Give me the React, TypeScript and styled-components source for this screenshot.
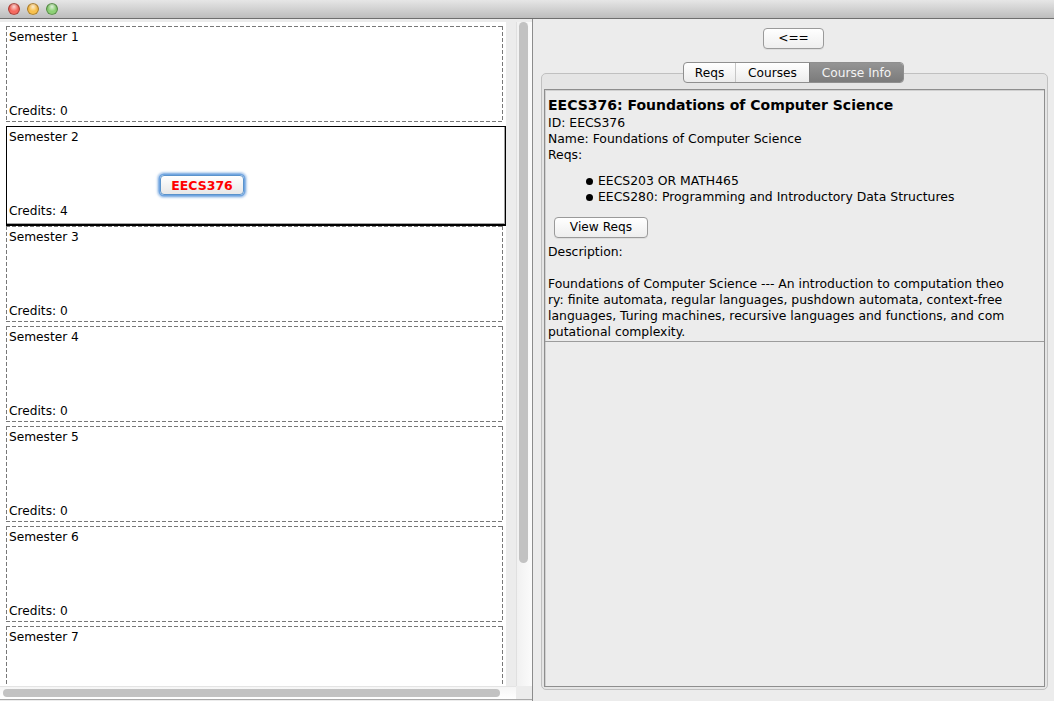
import React from "react";
import styled, { createGlobalStyle, css } from "styled-components";

const Global = createGlobalStyle`
  html, body { margin: 0; padding: 0; }
  body {
    width: 1054px;
    height: 701px;
    overflow: hidden;
    background: #ececec;
    font-family: "DejaVu Sans", "Liberation Sans", sans-serif;
    font-size: 12.2px;
    color: #000;
  }
  #root { height: 701px; }
  * { box-sizing: border-box; }
`;

const Window = styled.div`
  display: flex;
  flex-direction: column;
  width: 1054px;
  height: 701px;
`;

const TitleBar = styled.div`
  height: 19px;
  flex: none;
  border-bottom: 1px solid #6f6f6f;
  background: linear-gradient(#e6e6e6, #bdbdbd);
  display: flex;
  align-items: center;
  gap: 7px;
  padding-left: 8px;
  padding-bottom: 1px;
`;

const Light = styled.span<{ $c: string; $d: string }>`
  width: 12px;
  height: 12px;
  border-radius: 50%;
  background: radial-gradient(circle at 50% 30%, rgba(255, 255, 255, 0.75) 0, rgba(255, 255, 255, 0) 45%),
    radial-gradient(circle at 50% 70%, ${(p) => p.$c} 30%, ${(p) => p.$d} 100%);
  box-shadow: inset 0 0 0 1px rgba(0, 0, 0, 0.3);
`;

const Body = styled.div`
  flex: 1;
  display: flex;
  min-height: 0;
`;

const LeftPanel = styled.div`
  width: 532px;
  flex: none;
  display: grid;
  grid-template-columns: 506px 10px 16px;
  grid-template-rows: 3px 664px 13px 2px;
  background: #ececec;
`;

const Viewport = styled.div`
  grid-column: 1;
  grid-row: 2;
  background: #fff;
  overflow: hidden;
`;

const SemesterList = styled.div`
  display: flex;
  flex-direction: column;
  padding: 4px 0 0 6px;
`;

const dash = "#787878";

const SemesterBox = styled.div<{ $selected?: boolean }>`
  display: flex;
  flex-direction: column;
  flex: none;
  ${(p) =>
    p.$selected
      ? css`
          width: 501px;
          height: 100px;
          border: 1px solid #000;
          border-right-width: 2px;
          border-bottom-width: 2px;
          box-shadow: inset -1px -1px 0 #a5a5a5;
          padding: 2px 2px 5px 2px;
        `
      : css`
          width: 497px;
          height: 96px;
          margin-bottom: 4px;
          padding: 3px 3px 3px 3px;
          background:
            linear-gradient(90deg, ${dash} 66%, transparent 0) top left / 6px 1px repeat-x,
            linear-gradient(90deg, ${dash} 66%, transparent 0) bottom left / 6px 1px repeat-x,
            linear-gradient(180deg, ${dash} 66%, transparent 0) top left / 1px 6px repeat-y,
            linear-gradient(180deg, ${dash} 66%, transparent 0) top right / 1px 6px repeat-y;
        `}
`;

const Line = styled.div`
  line-height: 16px;
  height: 16px;
  white-space: nowrap;
`;

const SemesterBody = styled.div`
  flex: 1;
  display: flex;
  align-items: flex-start;
`;

const CourseChip = styled.div`
  margin: 30px 0 0 151px;
  width: 84px;
  height: 20px;
  display: flex;
  align-items: center;
  justify-content: center;
  border: 1px solid #5a93cc;
  border-radius: 4px;
  background: linear-gradient(#ffffff, #e7e7e7);
  box-shadow: 0 0 0 1.5px rgba(105, 160, 222, 0.9), 0 0 2px 2.5px rgba(105, 160, 222, 0.5);
  color: #ff0000;
  font-weight: bold;
  font-size: 12.5px;
`;

const VScroll = styled.div`
  grid-column: 3;
  grid-row: 2;
  background: linear-gradient(90deg, #f1f1f1, #fbfbfb);
  border-left: 1px solid #e0e0e0;
  padding-left: 2px;
`;

const VThumb = styled.div`
  width: 9px;
  height: 541px;
  border-radius: 5px;
  background: #c2c2c2;
`;

const HScroll = styled.div`
  grid-column: 1 / 3;
  grid-row: 3;
  background: linear-gradient(#f5f5f5, #fff);
  border-top: 1px solid #e4e4e4;
  padding: 2px 0 0 3px;
`;

const HThumb = styled.div`
  width: 497px;
  height: 8px;
  border-radius: 4px;
  background: #c2c2c2;
`;

const BottomEdge = styled.div`
  grid-column: 1 / 4;
  grid-row: 4;
  border-top: 1px solid #a9a9a9;
`;

const RightPanel = styled.div`
  flex: 1;
  display: flex;
  flex-direction: column;
  align-items: center;
  border-left: 1px solid #8c8c8c;
  padding: 9px 0 11px 0;
  background: #ececec;
`;

const PushButton = styled.button<{ $w: number }>`
  width: ${(p) => p.$w}px;
  height: 21px;
  flex: none;
  padding: 0;
  border: 1px solid #9a9a9a;
  border-radius: 4px;
  background: linear-gradient(#ffffff, #eeeeee);
  box-shadow: 0 1px 0 rgba(0, 0, 0, 0.06);
  font-family: "DejaVu Sans", "Liberation Sans", sans-serif;
  font-size: 12.2px;
  color: #000;
  line-height: 19px;
`;

const Tabs = styled.div`
  margin-top: 13px;
  display: flex;
  height: 21px;
  border: 1px solid #8f8f8f;
  border-radius: 4px;
  overflow: hidden;
  background: linear-gradient(#ffffff, #ececec);
  position: relative;
  z-index: 1;
  flex: none;
`;

const Tab = styled.div<{ $w: number; $active?: boolean }>`
  width: ${(p) => p.$w}px;
  display: flex;
  align-items: center;
  justify-content: center;
  font-size: 12.2px;
  & + & {
    border-left: 1px solid #c6c6c6;
  }
  ${(p) =>
    p.$active &&
    css`
      background: linear-gradient(#949494, #7b7b7b);
      color: #f3f3f3;
      border-left-color: #7b7b7b !important;
    `}
`;

const TabPane = styled.div`
  align-self: stretch;
  flex: 1;
  margin: -10px 6px 0 8px;
  border: 1px solid #c0c0c0;
  border-radius: 5px;
  background: #e5e5e5;
  padding: 15px 2px 2px 2px;
  display: flex;
  flex-direction: column;
`;

const ContentBox = styled.div`
  flex: 1;
  display: flex;
  flex-direction: column;
  border: 1px solid #8e8e8e;
  box-shadow: inset 1px 1px 0 #d0d0d0;
  background: #ececec;
`;

const InfoSection = styled.div`
  padding: 5px 3px 1px 3px;
  border-bottom: 1px solid #9c9c9c;
  font-size: 12.4px;
`;

const Title = styled.div`
  font-weight: bold;
  font-size: 14px;
  line-height: 20px;
  height: 20px;
  white-space: nowrap;
`;

const ReqList = styled.ul`
  list-style: none;
  margin: 10px 0 0 0;
  padding: 0 0 0 38px;
`;

const ReqItem = styled.li`
  display: flex;
  align-items: center;
  line-height: 16px;
  height: 16px;
  white-space: nowrap;
  &::before {
    content: "";
    width: 7px;
    height: 7px;
    border-radius: 50%;
    background: #000;
    margin-right: 5px;
    flex: none;
  }
`;

const ButtonRow = styled.div`
  margin: 12px 0 6px 6px;
  display: flex;
`;

const BlankLine = styled.div`
  height: 16px;
`;

const semesters = [
  { name: "Semester 1", credits: 0 },
  { name: "Semester 2", credits: 4, course: "EECS376" },
  { name: "Semester 3", credits: 0 },
  { name: "Semester 4", credits: 0 },
  { name: "Semester 5", credits: 0 },
  { name: "Semester 6", credits: 0 },
  { name: "Semester 7", credits: 0 },
];

const descLines = [
  "Foundations of Computer Science --- An introduction to computation theo",
  "ry: finite automata, regular languages, pushdown automata, context-free",
  "languages, Turing machines, recursive languages and functions, and com",
  "putational complexity.",
];

export default function App() {
  return (
    <Window>
      <Global />
      <TitleBar>
        <Light $c="#f56a60" $d="#c8352c" />
        <Light $c="#f8c14e" $d="#cf8a1c" />
        <Light $c="#8dd176" $d="#4f9a3a" />
      </TitleBar>
      <Body>
        <LeftPanel>
          <Viewport>
            <SemesterList>
              {semesters.map((s) => (
                <SemesterBox key={s.name} $selected={!!s.course}>
                  <Line>{s.name}</Line>
                  <SemesterBody>{s.course && <CourseChip>{s.course}</CourseChip>}</SemesterBody>
                  <Line>Credits: {s.credits}</Line>
                </SemesterBox>
              ))}
            </SemesterList>
          </Viewport>
          <VScroll>
            <VThumb />
          </VScroll>
          <HScroll>
            <HThumb />
          </HScroll>
          <BottomEdge />
        </LeftPanel>
        <RightPanel>
          <PushButton $w={61}>&lt;==</PushButton>
          <Tabs>
            <Tab $w={51}>Reqs</Tab>
            <Tab $w={74}>Courses</Tab>
            <Tab $w={94} $active>
              Course Info
            </Tab>
          </Tabs>
          <TabPane>
            <ContentBox>
              <InfoSection>
                <Title>EECS376: Foundations of Computer Science</Title>
                <Line>ID: EECS376</Line>
                <Line>Name: Foundations of Computer Science</Line>
                <Line>Reqs:</Line>
                <ReqList>
                  <ReqItem>EECS203 OR MATH465</ReqItem>
                  <ReqItem>EECS280: Programming and Introductory Data Structures</ReqItem>
                </ReqList>
                <ButtonRow>
                  <PushButton $w={94}>View Reqs</PushButton>
                </ButtonRow>
                <Line>Description:</Line>
                <BlankLine />
                {descLines.map((l) => (
                  <Line key={l}>{l}</Line>
                ))}
              </InfoSection>
            </ContentBox>
          </TabPane>
        </RightPanel>
      </Body>
    </Window>
  );
}
